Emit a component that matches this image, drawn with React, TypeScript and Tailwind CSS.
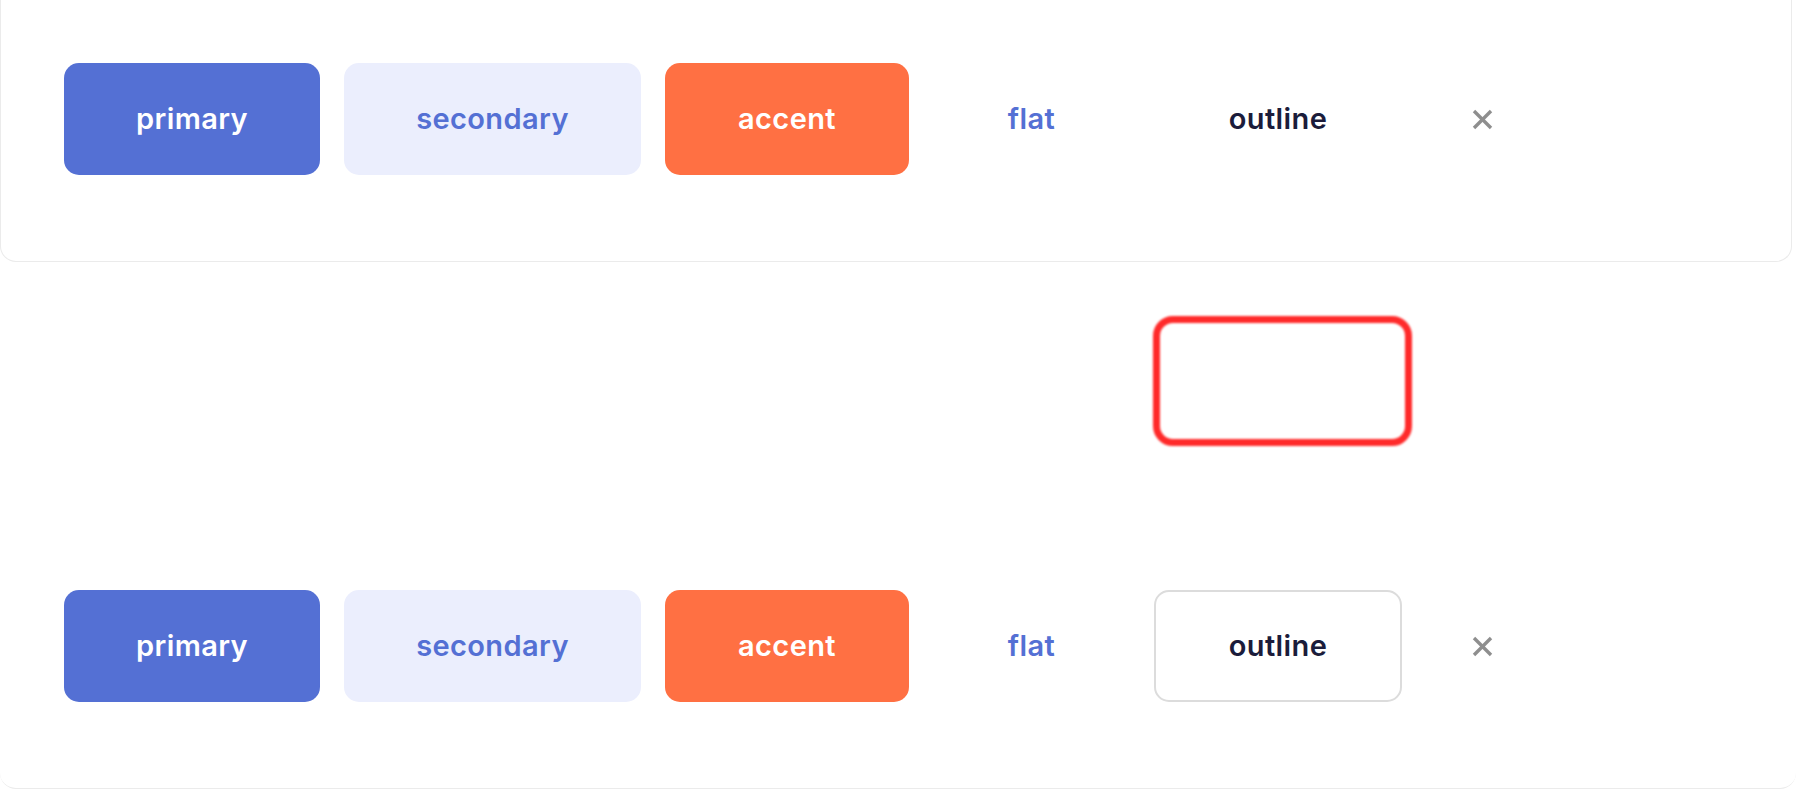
import { ReactNode } from "react";

type Variant = "primary" | "secondary" | "accent" | "flat" | "outline";

const variantClasses: Record<Variant, string> = {
  primary: "w-[256px] bg-[#5470d4] text-white",
  secondary: "w-[297px] bg-[#ebeefd] text-[#5470d4]",
  accent: "w-[244px] bg-[#ff7043] text-white",
  flat: "w-[197px] bg-transparent text-[#5470d4]",
  outline: "w-[248px] bg-transparent text-[#1b1c3b]",
};

function Button({ variant, bordered, children }: { variant: Variant; bordered?: boolean; children: ReactNode }) {
  return (
    <button
      className={`flex h-[112px] shrink-0 items-center justify-center rounded-[15px] text-[29px] font-semibold tracking-[0.4px] ${
        variantClasses[variant]
      } ${bordered ? "border-2 border-[#dcdcdc]" : "border-2 border-transparent"}`}
    >
      {children}
    </button>
  );
}

function CloseButton() {
  return (
    <button className="flex h-[112px] w-[112px] shrink-0 items-center justify-center">
      <svg width="21" height="21" viewBox="0 0 21 21" fill="none" stroke="#8e8e8e" strokeWidth="3.4">
        <line x1="2" y1="2" x2="19" y2="19" />
        <line x1="19" y1="2" x2="2" y2="19" />
      </svg>
    </button>
  );
}

function ButtonRow({ outlined }: { outlined: boolean }) {
  return (
    <div className="flex items-center gap-6">
      <Button variant="primary">primary</Button>
      <Button variant="secondary">secondary</Button>
      <Button variant="accent">accent</Button>
      <Button variant="flat">flat</Button>
      <Button variant="outline" bordered={outlined}>
        outline
      </Button>
      <CloseButton />
    </div>
  );
}

export default function App() {
  return (
    <div className="min-h-[792px] bg-white" style={{ fontFamily: "Inter, 'Noto Sans', sans-serif" }}>
      <div className="mr-1 rounded-b-[16px] border-b border-l border-r border-[#ebebeb] bg-white pl-[63px] pt-[63px] pb-[86px]">
        <ButtonRow outlined={false} />
      </div>
      <div className="mb-[2px] rounded-b-[16px] border-b border-[#ebebeb] bg-white pl-16 pt-[54px] pb-[86px]">
        <div className="ml-[1089px] h-[130px] w-[259px] rounded-[20px] border-[7px] border-[#ff2a2a] blur-[0.8px]" />
        <div className="mt-[144px]">
          <ButtonRow outlined={true} />
        </div>
      </div>
    </div>
  );
}
